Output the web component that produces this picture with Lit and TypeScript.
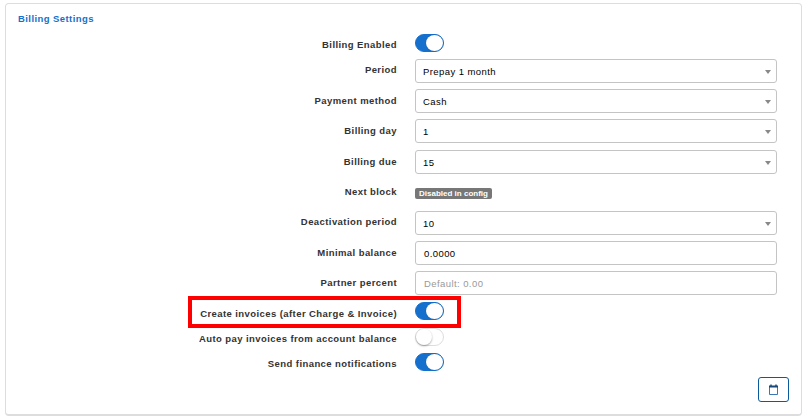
import { LitElement, html, css, svg, nothing } from "lit";
import { customElement } from "lit/decorators.js";
import { classMap } from "lit/directives/class-map.js";
import { styleMap } from "lit/directives/style-map.js";

type Kind = "toggle" | "select" | "input" | "badge";
interface Row {
  label: string;
  kind: Kind;
  height: number;
  value?: string;
  on?: boolean;
  placeholder?: boolean;
  marked?: boolean;
  labelTop?: number;
}

const rows: Row[] = [
  { label: "Billing Enabled", kind: "toggle", on: true, height: 25, labelTop: 5 },
  { label: "Period", kind: "select", value: "Prepay 1 month", height: 30, labelTop: 5 },
  { label: "Payment method", kind: "select", value: "Cash", height: 30 },
  { label: "Billing day", kind: "select", value: "1", height: 31 },
  { label: "Billing due", kind: "select", value: "15", height: 30 },
  { label: "Next block", kind: "badge", value: "Disabled in config", height: 31 },
  { label: "Deactivation period", kind: "select", value: "10", height: 30, labelTop: 5 },
  { label: "Minimal balance", kind: "input", value: "0.0000", height: 30 },
  { label: "Partner percent", kind: "input", value: "Default: 0.00", placeholder: true, height: 31 },
  { label: "Create invoices (after Charge & Invoice)", kind: "toggle", on: true, marked: true, height: 26 },
  { label: "Auto pay invoices from account balance", kind: "toggle", height: 25, labelTop: 5 },
  { label: "Send finance notifications", kind: "toggle", on: true, height: 24, labelTop: 5 },
];

@customElement("app-root")
export class AppRoot extends LitElement {
  static styles = css`
    :host {
      display: block;
      box-sizing: border-box;
      width: 802px;
      height: 418px;
      padding: 3px 0 2px 5px;
      background: #fff;
      overflow: hidden;
      font: 9.5px/12px "Liberation Sans", Arial, sans-serif;
      letter-spacing: 0.42px;
      color: #333;
    }
    .card {
      box-sizing: border-box;
      height: 413px;
      width: 797px;
      border: 1px solid #ddd;
      border-bottom-width: 2px;
      border-radius: 4px;
      padding: 9px 12px 0;
      display: flex;
      flex-direction: column;
    }
    h2 {
      margin: 0;
      height: 21px;
      font-size: 9.5px;
      line-height: 12px;
      color: #1470cc;
    }
    .row {
      position: relative;
      display: grid;
      grid-template-columns: 379px 362px;
      column-gap: 18px;
      align-items: start;
    }
    .label {
      font-weight: bold;
      text-align: right;
      white-space: nowrap;
      padding-top: 6px;
    }
    .field {
      box-sizing: border-box;
      height: 24px;
      border: 1px solid #c4c4c4;
      border-radius: 3px;
      padding: 1px 5px 0 7px;
      display: flex;
      align-items: center;
      justify-content: space-between;
      color: #000;
    }
    .field.input {
      padding-left: 8px;
    }
    .placeholder {
      color: #999;
    }
    .arrow {
      width: 6px;
      height: 4px;
      fill: #888;
    }
    .badge {
      justify-self: start;
      margin-top: 8px;
      box-sizing: border-box;
      width: 77px;
      height: 11px;
      border-radius: 2px;
      background: #777;
      color: #fff;
      font-size: 8px;
      font-weight: bold;
      letter-spacing: 0;
      line-height: 11px;
      text-align: center;
      white-space: nowrap;
    }
    .toggle {
      box-sizing: border-box;
      width: 29px;
      height: 18px;
      border: 1px solid #ddd;
      border-radius: 9px;
      display: flex;
      background: #fff;
    }
    .knob {
      width: 16px;
      height: 16px;
      border-radius: 50%;
      background: #fff;
      box-shadow: 0 1px 2px rgba(0, 0, 0, 0.35);
    }
    .toggle.on {
      background: #1470cc;
      border-color: #1470cc;
      justify-content: flex-end;
    }
    .toggle.on .knob {
      width: 17px;
      box-shadow: 0 0 1px rgba(0, 0, 0, 0.3);
    }
    .mark {
      position: absolute;
      box-sizing: border-box;
      left: 170px;
      top: -6px;
      width: 273px;
      height: 32px;
      border: 4px solid #fe0000;
    }
    .save {
      align-self: flex-end;
      box-sizing: border-box;
      width: 31px;
      height: 25px;
      padding: 0;
      border: 1px solid #0b5a9c;
      border-radius: 3px;
      background: #fff;
      display: flex;
      align-items: center;
      justify-content: center;
    }
    .save svg {
      width: 11px;
      height: 11px;
      fill: none;
      stroke: #3a78b4;
    }
    .save .bar {
      stroke: #17497a;
    }
  `;

  private control(r: Row) {
    switch (r.kind) {
      case "toggle":
        return html`<div class=${classMap({ toggle: true, on: !!r.on })}><span class="knob"></span></div>`;
      case "badge":
        return html`<span class="badge">${r.value}</span>`;
      default:
        return html`<div class=${classMap({ field: true, input: r.kind === "input" })}>
          <span class=${classMap({ placeholder: !!r.placeholder })}>${r.value}</span>
          ${r.kind === "select"
            ? html`<svg class="arrow" viewBox="0 0 6 4">${svg`<path d="M0 0H6L3 4Z" />`}</svg>`
            : nothing}
        </div>`;
    }
  }

  render() {
    return html`<section class="card">
      <h2>Billing Settings</h2>
      ${rows.map(
        (r) => html`<div class="row" style=${styleMap({ height: `${r.height}px` })}>
          <div class="label" style=${styleMap({
            paddingTop: r.labelTop === undefined ? null : `${r.labelTop}px`,
          })}>${r.label}</div>
          ${this.control(r)}
          ${r.marked ? html`<div class="mark"></div>` : nothing}
        </div>`
      )}
      <button class="save" aria-label="Calendar">
        <svg viewBox="0 0 11 11">
          <path d="M1.5 3V10.5H9.5V3" />
          <path class="bar" d="M1 2.5H10" stroke-width="2" />
          <path class="bar" d="M3 .5V2M8 .5V2" stroke-width="1.4" />
        </svg>
      </button>
    </section>`;
  }
}
